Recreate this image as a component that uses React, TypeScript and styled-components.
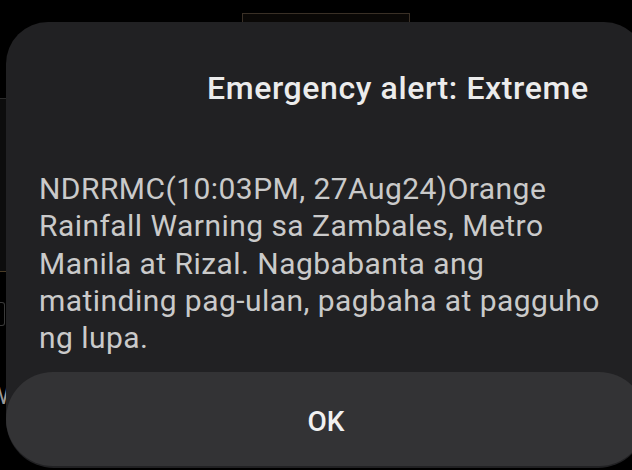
import styled, { createGlobalStyle } from 'styled-components';

const GlobalStyle = createGlobalStyle`
  html, body {
    margin: 0;
    padding: 0;
    background: #000;
  }
  body {
    font-family: Roboto, "Noto Sans", "Liberation Sans", sans-serif;
  }
`;

const Screen = styled.div`
  position: relative;
  width: 632px;
  height: 470px;
  overflow: hidden;
  background: #000;
`;

// the app screen that sits behind the alert
const Behind = styled.div`
  display: flex;
  flex-direction: column;
  height: 100%;
`;

const TopTab = styled.div`
  margin: 13px 0 0 242px;
  width: 166px;
  height: 14px;
  border: 1px solid #3a3026;
  background: #0a0806;
`;

const SidePanel = styled.div`
  margin-top: 69px;
  width: 40px;
  height: 172px;
  background: #0d0d0d;
  border-top: 1px solid #2b2b2b;
  border-bottom: 1px solid #4a3c26;
`;

const SideChip = styled.div`
  margin-top: 30px;
  width: 4px;
  height: 22px;
  border: 1px solid #3a3a3a;
  border-left: none;
  border-radius: 0 3px 3px 0;
`;

const GhostText = styled.div`
  margin-left: -12px;
  font-size: 24px;
  line-height: 36px;
  color: #9a9a9a;
`;

const GhostList = styled.div`
  margin-top: 52px;
  display: flex;
  flex-direction: column;
`;

const Dialog = styled.div`
  position: absolute;
  left: 6px;
  top: 22px;
  width: 640px;
  height: 446px;
  display: flex;
  flex-direction: column;
  background: #212123;
  border-radius: 42px 42px 48px 48px;
`;

const Title = styled.h2`
  margin: 48px 0 0 0;
  padding-left: 201px;
  font-size: 32px;
  line-height: 36px;
  letter-spacing: 0.6px;
  font-weight: 500;
  color: #ececec;
  white-space: nowrap;
`;

const Message = styled.p`
  margin: 64px 0 0 0;
  padding-left: 33px;
  width: 599px;
  box-sizing: border-box;
  font-size: 30px;
  line-height: 37.3px;
  letter-spacing: 0.45px;
  font-weight: 400;
  color: #cacaca;
`;

const OkButton = styled.button`
  margin-top: auto;
  margin-bottom: 2px;
  padding-top: 6px;
  width: 100%;
  height: 94px;
  border: none;
  border-radius: 48px;
  background: #333335;
  color: #f1f1f1;
  font-family: inherit;
  font-size: 28px;
  font-weight: 500;
  cursor: pointer;
`;

export default function App() {
  return (
    <>
      <GlobalStyle />
      <Screen>
        <Behind>
          <TopTab />
          <SidePanel />
          <SideChip />
          <GhostList>
            <GhostText>W</GhostText>
            <GhostText>(</GhostText>
          </GhostList>
        </Behind>
        <Dialog role="alertdialog">
          <Title>Emergency alert: Extreme</Title>
          <Message>
            NDRRMC(10:03PM, 27Aug24)Orange Rainfall Warning sa Zambales, Metro
            Manila at Rizal. Nagbabanta ang matinding pag-ulan, pagbaha at
            pagguho ng lupa.
          </Message>
          <OkButton>OK</OkButton>
        </Dialog>
      </Screen>
    </>
  );
}
